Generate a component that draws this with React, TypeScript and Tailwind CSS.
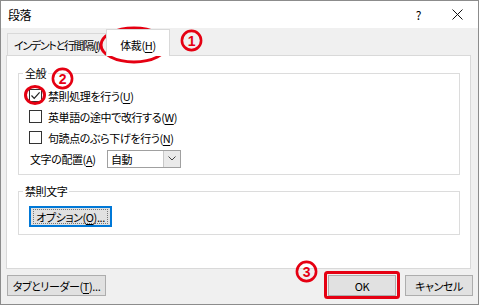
import React from 'react';

const jp = "font-['Noto_Sans_CJK_JP','Noto_Sans',sans-serif] [font-feature-settings:'palt']";

function Check({ checked }: { checked?: boolean }) {
  return (
    <span className="flex h-[13px] w-[13px] shrink-0 items-center justify-center border border-[#333] bg-white">
      {checked && (
        <svg width="11" height="11" viewBox="0 0 11 11">
          <path d="M1.5 5.5 L4.2 8.3 L9.6 2.4" fill="none" stroke="#222" strokeWidth="1.2" />
        </svg>
      )}
    </span>
  );
}

function Mn({ c }: { c: string }) {
  return <span className="underline underline-offset-2">{c}</span>;
}

// 赤い丸数字
function Num({ n, className }: { n: string; className: string }) {
  return (
    <svg width="23" height="23" viewBox="0 0 23 23" className={`pointer-events-none absolute ${className}`}>
      <circle cx="11.5" cy="11.5" r="9.6" fill="none" stroke="#e50012" strokeWidth="2.6" />
      <text x="11.5" y="16.6" textAnchor="middle" fontSize="14" fontWeight="bold" fill="#e50012" fontFamily="Liberation Sans, Arial, sans-serif">
        {n}
      </text>
    </svg>
  );
}

export default function App() {
  return (
    <div className={`relative flex h-[305px] w-[479px] flex-col overflow-hidden border border-[#8c8c8c] bg-[#f0f0f0] text-[11px] leading-[16px] tracking-[-0.4px] text-black ${jp}`}>
      {/* タイトルバー */}
      <div className="flex h-[27px] items-center bg-white pl-[7px]">
        <span className="text-[12px]">段落</span>
        <span className="ml-auto mr-[31px] text-[12px]">?</span>
        <svg width="11" height="11" viewBox="0 0 11 11" className="mr-[15px]">
          <path d="M0.5 0.5 L10.5 10.5 M10.5 0.5 L0.5 10.5" stroke="#111" strokeWidth="1" />
        </svg>
      </div>

      {/* タブ */}
      <div className="flex h-[27px] items-end pl-[6px]">
        <div className="flex h-[22px] w-[100px] items-center overflow-hidden whitespace-nowrap border-l border-t border-[#d9d9d9] pl-[6px] tracking-[-1.3px]">
          インデントと行間隔(<Mn c="I" />)
        </div>
        <div className="relative z-10 -mb-px -ml-[1px] flex h-[27px] w-[64px] items-center justify-center border-l border-r border-t border-[#d9d9d9] bg-white pt-[3px]">
          体裁(<Mn c="H" />)
        </div>
      </div>

      {/* パネル */}
      <div className="ml-[5px] mr-[7px] flex h-[214px] flex-col border border-[#d9d9d9] bg-white">
        <fieldset className="ml-[11px] mr-[10px] mt-[9px] border border-[#dcdcdc] pb-[5px] pl-[10px] pt-[4px]">
          <legend className="-ml-[6px] px-[2px]">全般</legend>
          <div className="flex h-[21px] items-center gap-[6px]">
            <Check checked />
            <span>禁則処理を行う(<Mn c="U" />)</span>
          </div>
          <div className="flex h-[21px] items-center gap-[6px]">
            <Check />
            <span>英単語の途中で改行する(<Mn c="W" />)</span>
          </div>
          <div className="flex h-[21px] items-center gap-[6px]">
            <Check />
            <span>句読点のぶら下げを行う(<Mn c="N" />)</span>
          </div>
          <div className="flex h-[21px] items-center pl-[1px]">
            <span className="w-[77px]">文字の配置(<Mn c="A" />)</span>
            <div className="flex h-[18px] w-[74px] items-stretch border border-[#a0a0a0] bg-white">
              <span className="flex flex-1 items-center pl-[3px]">自動</span>
              <span className="flex w-[17px] items-center justify-center border-l border-[#c8c8c8] bg-[#eaeaea]">
                <svg width="8" height="5" viewBox="0 0 8 5">
                  <path d="M0.5 0.5 L4 4 L7.5 0.5" fill="none" stroke="#444" strokeWidth="1" />
                </svg>
              </span>
            </div>
          </div>
        </fieldset>

        <fieldset className="ml-[11px] mr-[10px] mt-[8px] border border-[#dcdcdc] pb-[7px] pl-[10px] pt-[7px]">
          <legend className="-ml-[6px] px-[2px]">禁則文字</legend>
          <div className="flex h-[21px] w-[83px] items-center justify-center border-2 border-[#0078d7] bg-[#e1e1e1]">
            <span className="flex h-[15px] items-center whitespace-nowrap border border-dotted border-[#777] px-[2px]">
              オプション(<Mn c="O" />)...
            </span>
          </div>
        </fieldset>
      </div>

      {/* 下部ボタン */}
      <div className="mt-[6px] flex items-center pl-[6px] pr-[5px]">
        <div className="flex h-[21px] w-[99px] items-center justify-center whitespace-nowrap border border-[#adadad] bg-[#e1e1e1]">
          タブとリーダー(<Mn c="T" />)...
        </div>
        <div className="ml-auto flex h-[21px] w-[68px] items-center justify-center border border-[#adadad] bg-[#e1e1e1]">
          OK
        </div>
        <div className="ml-[9px] flex h-[21px] w-[68px] items-center justify-center border border-[#adadad] bg-[#e1e1e1]">
          キャンセル
        </div>
      </div>

      {/* 注記 */}
      <svg className="pointer-events-none absolute left-[-1px] top-[-1px]" width="479" height="305">
        <ellipse cx="134" cy="45" rx="33" ry="17" fill="none" stroke="#e50012" strokeWidth="3" />
        <ellipse cx="35" cy="95" rx="9.5" ry="8.5" fill="none" stroke="#e50012" strokeWidth="3" />
        <rect x="325.5" y="272.5" width="73" height="25" rx="2" fill="none" stroke="#e50012" strokeWidth="3" />
      </svg>
      <Num n="1" className="left-[179px] top-[28px]" />
      <Num n="2" className="left-[50px] top-[66px]" />
      <Num n="3" className="left-[294px] top-[259px]" />
    </div>
  );
}
